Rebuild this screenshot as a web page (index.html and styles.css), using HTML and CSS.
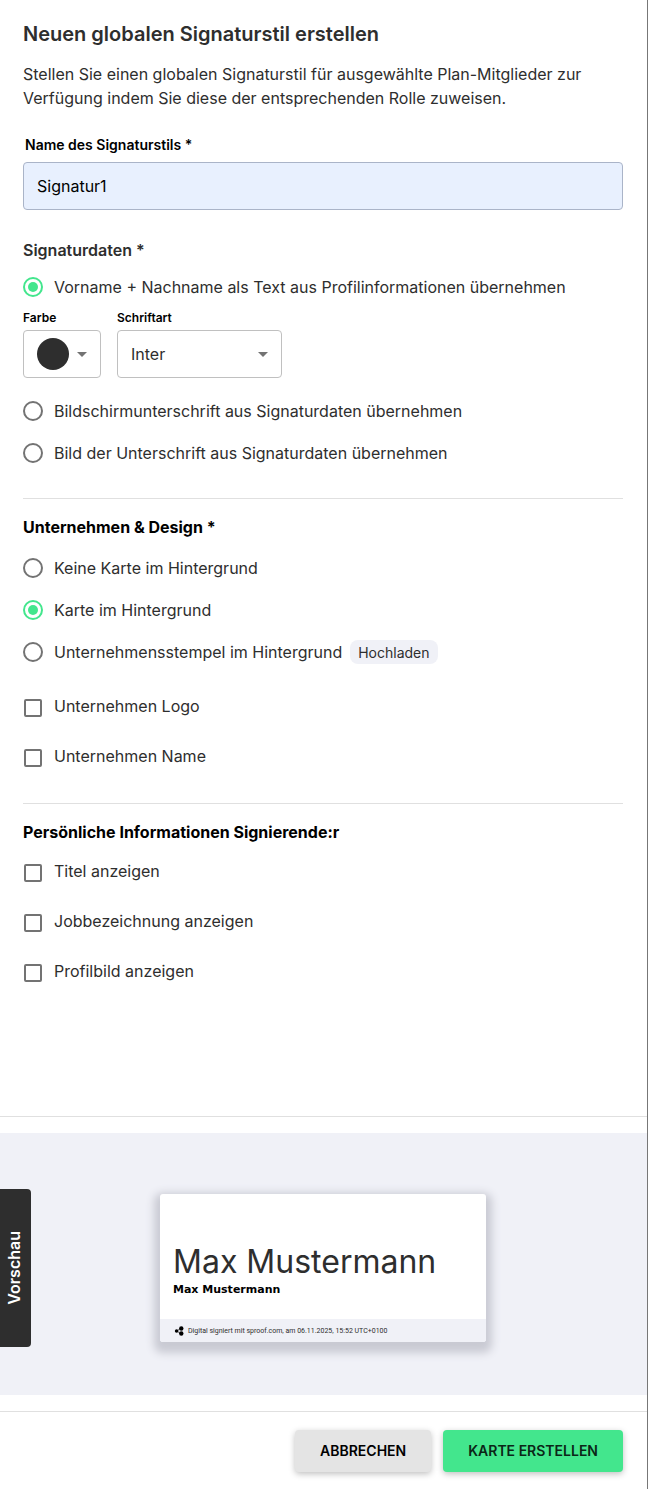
FILE: index.html
```html
<!DOCTYPE html>
<html lang="de">

<head>
    <meta charset="UTF-8">
    <meta name="viewport" content="width=device-width, initial-scale=1">
    <title>Neuen globalen Signaturstil erstellen</title>
    <link rel="stylesheet" href="styles.css">
</head>

<body>

    <form class="dialog">
        <main class="content">
            <h1>Neuen globalen Signaturstil erstellen</h1>
            <p class="intro">Stellen Sie einen globalen Signaturstil für ausgewählte Plan-Mitglieder zur Verfügung indem Sie diese der entsprechenden Rolle zuweisen.</p>

            <label class="name_label" for="stilname">Name des Signaturstils *</label>
            <input class="name_input" type="text" id="stilname" value="Signatur1">

            <section class="signaturdaten">
                <h2>Signaturdaten *</h2>
                <label class="option"><input type="radio" name="daten" checked>Vorname + Nachname als Text aus Profilinformationen übernehmen</label>

                <div class="felder">
                    <div class="feld">
                        <label for="farbe">Farbe</label>
                        <button type="button" id="farbe" class="farbe" aria-haspopup="true">
                            <span class="farbkreis"></span>
                            <span class="pfeil"></span>
                        </button>
                    </div>
                    <div class="feld">
                        <label for="schriftart">Schriftart</label>
                        <div class="auswahl">
                            <select id="schriftart">
                                <option>Inter</option>
                            </select>
                            <span class="pfeil"></span>
                        </div>
                    </div>
                </div>

                <label class="option"><input type="radio" name="daten">Bildschirmunterschrift aus Signaturdaten übernehmen</label>
                <label class="option"><input type="radio" name="daten">Bild der Unterschrift aus Signaturdaten übernehmen</label>
            </section>

            <section class="block design">
                <h2>Unternehmen &amp; Design *</h2>
                <label class="option"><input type="radio" name="karte">Keine Karte im Hintergrund</label>
                <label class="option"><input type="radio" name="karte" checked>Karte im Hintergrund</label>
                <div class="stempel">
                    <label class="option"><input type="radio" name="karte">Unternehmensstempel im Hintergrund</label>
                    <button type="button" class="hochladen">Hochladen</button>
                </div>
                <div class="haken">
                    <label class="check"><input type="checkbox"><span>Unternehmen Logo</span></label>
                    <label class="check"><input type="checkbox"><span>Unternehmen Name</span></label>
                </div>
            </section>

            <section class="block">
                <h2>Persönliche Informationen Signierende:r</h2>
                <label class="check"><input type="checkbox"><span>Titel anzeigen</span></label>
                <label class="check"><input type="checkbox"><span>Jobbezeichnung anzeigen</span></label>
                <label class="check"><input type="checkbox"><span>Profilbild anzeigen</span></label>
            </section>
        </main>

        <section class="vorschau">
            <div class="vorschau_flaeche">
                <div class="tab"><span>Vorschau</span></div>
                <article class="karte">
                    <div class="karte_text">
                        <p class="unterschrift">Max Mustermann</p>
                        <p class="person">Max Mustermann</p>
                    </div>
                    <div class="karte_fuss">
                        <svg width="10" height="10" viewBox="0 0 10 10" aria-hidden="true">
                            <path d="M2.5 5 7 2.4M2.5 5 7 7.6" stroke="#000" stroke-width="0.6"/>
                            <circle cx="2.6" cy="5" r="1.8"/>
                            <circle cx="7.3" cy="2.5" r="2.2"/>
                            <circle cx="7.3" cy="7.5" r="2.2"/>
                        </svg>
                        <span>Digital signiert mit sproof.com, am 06.11.2025, 15:52 UTC+0100</span>
                    </div>
                </article>
            </div>
        </section>

        <footer>
            <button type="button" class="knopf">ABBRECHEN</button>
            <button type="submit" class="knopf knopf_gruen">KARTE ERSTELLEN</button>
        </footer>
    </form>

</body>

</html>
```
FILE: styles.css
```css
* {
    box-sizing: border-box;
}

body {
    margin: 0;
    font-family: Inter, "Liberation Sans", sans-serif;
    font-size: 16px;
    line-height: 24px;
    color: #2e2e2e;
    background-color: white;
}

h1,
h2,
p {
    margin: 0;
}

input,
select,
button {
    font: inherit;
    color: inherit;
    margin: 0;
}

.dialog {
    display: flex;
    flex-direction: column;
    min-height: 100vh;
    border-right: 1px solid #777;
}

.content {
    flex: 1;
    padding: 18px 24px 32px 23px;
}

h1 {
    font-size: 20px;
    line-height: 32px;
    font-weight: 600;
}

h2 {
    font-size: 16px;
    font-weight: 600;
}

.intro {
    margin-top: 12px;
}

/* Name */

.name_label {
    display: block;
    margin-top: 25px;
    padding-left: 2px;
    font-size: 14px;
    line-height: 20px;
    font-weight: 600;
    color: black;
}

.name_input {
    display: block;
    width: 100%;
    height: 48px;
    margin-top: 7px;
    padding: 0 13px;
    border: 1px solid #aab4c8;
    border-radius: 4px;
    background-color: #e8f0fe;
    color: black;
}

/* Radio + Checkbox */

.option {
    display: flex;
    align-items: center;
    gap: 11px;
    min-height: 42px;
}

.check {
    display: flex;
    align-items: center;
    gap: 12px;
    min-height: 50px;
    padding-left: 1px;
}

.check span {
    padding-bottom: 4px;
}

input[type="radio"],
input[type="checkbox"] {
    appearance: none;
    flex: none;
    border: 2px solid #737373;
    background-color: white;
}

input[type="radio"] {
    width: 20px;
    height: 20px;
    border-radius: 50%;
}

input[type="radio"]:checked {
    border-color: #43e68d;
    padding: 3px;
    background-color: #43e68d;
    background-clip: content-box;
}

input[type="checkbox"] {
    width: 18px;
    height: 18px;
    border-radius: 2px;
}

/* Signaturdaten */

.signaturdaten {
    margin-top: 28px;
    padding-bottom: 24px;
}

.signaturdaten h2 {
    margin-bottom: 4px;
}

.felder {
    display: flex;
    gap: 16px;
    margin-top: 2px;
    margin-bottom: 12px;
}

.feld label {
    display: block;
    margin-bottom: 4px;
    font-size: 12px;
    line-height: 16px;
    font-weight: 600;
    color: black;
}

.farbe,
.auswahl {
    display: flex;
    align-items: center;
    height: 48px;
    padding: 0 13px;
    border: 1px solid #c0c0c0;
    border-radius: 4px;
    background-color: white;
}

.farbe {
    gap: 8px;
}

.farbkreis {
    width: 32px;
    height: 32px;
    border-radius: 50%;
    background-color: #2e2e2e;
}

.auswahl select {
    appearance: none;
    width: 127px;
    padding: 0;
    border: none;
    background: none;
}

.pfeil {
    border: 5px solid transparent;
    border-top-color: #737373;
    border-bottom: none;
}

/* Abschnitte mit Trennlinie */

.block {
    padding-top: 16px;
    border-top: 1px solid #e0e0e0;
}

.block h2 {
    margin-bottom: 4px;
    font-weight: 700;
    color: black;
}

.design {
    padding-bottom: 20px;
}

.design h2 {
    margin-bottom: 8px;
}

.stempel {
    display: flex;
    align-items: center;
    gap: 8px;
}

.hochladen {
    height: 24px;
    padding: 2px 8px 0;
    border: none;
    border-radius: 8px;
    background-color: #f0f1f7;
    font-size: 14px;
    line-height: 22px;
}

.haken {
    margin-top: 10px;
}

/* Vorschau */

.vorschau {
    padding: 16px 0;
    border-top: 1px solid #e0e0e0;
    border-bottom: 1px solid #e0e0e0;
}

.vorschau_flaeche {
    display: grid;
    grid-template-columns: 31px 1fr 32px;
    align-items: center;
    justify-items: center;
    padding: 56px 0 48px;
    background-color: #f0f1f7;
}

.tab {
    display: flex;
    align-items: center;
    justify-content: center;
    width: 31px;
    height: 158px;
    padding-right: 3px;
    border-radius: 0 4px 4px 0;
    background-color: #2e2e2e;
    color: white;
    font-weight: 600;
}

.tab span {
    writing-mode: vertical-rl;
    transform: rotate(180deg);
}

.karte {
    width: 326px;
    border-radius: 3px;
    overflow: hidden;
    background-color: white;
    box-shadow: 0 5px 8px 6px #c9cad3;
}

.karte_text {
    padding: 48px 13px 21px;
}

.unterschrift {
    font-size: 32px;
    line-height: 40px;
}

.person {
    font-family: "DejaVu Sans", sans-serif;
    font-size: 11px;
    line-height: 16px;
    font-weight: bold;
    color: black;
}

.karte_fuss {
    display: flex;
    align-items: center;
    gap: 4px;
    height: 23px;
    padding-left: 14px;
    background-color: #f0f1f7;
    font-family: Roboto, sans-serif;
    font-size: 7px;
}

/* Knöpfe unten */

footer {
    display: flex;
    justify-content: flex-end;
    gap: 12px;
    padding: 18px 24px 17px;
}

.knopf {
    height: 42px;
    padding: 0 25px;
    border: none;
    border-radius: 4px;
    background-color: #e4e4e4;
    box-shadow: 0 2px 6px rgba(0, 0, 0, 0.25);
    font-size: 14px;
    font-weight: 600;
    color: black;
}

.knopf_gruen {
    background-color: #43e68d;
    color: #0b2617;
}
```
